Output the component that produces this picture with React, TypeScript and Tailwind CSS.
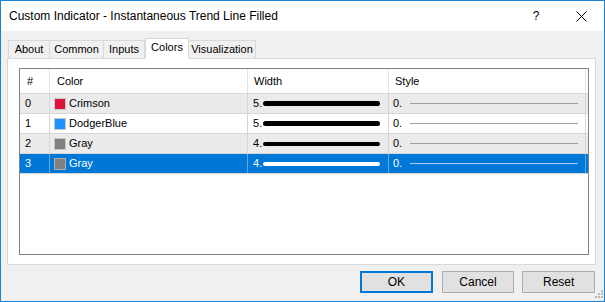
import React from 'react';

type Row = { idx: number; name: string; color: string; width: number };

const rows: Row[] = [
  { idx: 0, name: 'Crimson', color: '#dc143c', width: 5 },
  { idx: 1, name: 'DodgerBlue', color: '#1e90ff', width: 5 },
  { idx: 2, name: 'Gray', color: '#808080', width: 4 },
  { idx: 3, name: 'Gray', color: '#808080', width: 4 },
];

const tabs = ['About', 'Common', 'Inputs', 'Colors', 'Visualization'];
const tabWidths: Record<string, string> = {
  About: 'w-[42px]',
  Common: 'w-[54px]',
  Inputs: 'w-[41px]',
  Colors: 'w-[44px]',
  Visualization: 'w-[67px]',
};

function TitleBar() {
  return (
    <div className="h-[30px] bg-white flex items-center shrink-0">
      <span className="pl-[8px] text-[12px] text-black flex-1 leading-none">
        Custom Indicator - Instantaneous Trend Line Filled
      </span>
      <div className="w-[46px] h-full flex items-center justify-center text-[12px] text-black">?</div>
      <div className="w-[45px] h-full flex items-center justify-center">
        <svg width="11" height="11" viewBox="0 0 11 11">
          <path d="M0.5 0.5 L10.5 10.5 M10.5 0.5 L0.5 10.5" stroke="#000" strokeWidth="1" />
        </svg>
      </div>
    </div>
  );
}

function Tabs() {
  return (
    <div className="flex items-end h-[20px] ml-[7px] relative z-10">
      {tabs.map((t, i) => {
        const active = t === 'Colors';
        return (
          <div
            key={t}
            className={`${tabWidths[t]} flex items-center justify-center text-[11px] border-[#d9d9d9] ${
              active
                ? 'h-[21px] bg-white border border-b-white -mb-px pb-[2px]'
                : `h-[18px] bg-[#f0f0f0] border-t border-r ${i === 0 ? 'border-l' : ''}`
            }`}
          >
            {t}
          </div>
        );
      })}
    </div>
  );
}

function ColorGrid() {
  return (
    <div className="w-[570px] h-[187px] border border-[#828282] bg-white text-[11px]">
      <div className="grid grid-cols-[30px_198px_141px_197px] h-[25px] border-b border-[#d6d6d6]">
        <div className="border-r border-[#e3e3e3] pl-[7px] flex items-center">#</div>
        <div className="border-r border-[#e3e3e3] pl-[7px] flex items-center">Color</div>
        <div className="border-r border-[#e3e3e3] pl-[6px] flex items-center">Width</div>
        <div className="border-r border-[#e3e3e3] pl-[6px] flex items-center">Style</div>
      </div>
      {rows.map((r) => {
        const sel = r.idx === 3;
        const bg = sel ? 'bg-[#0078d7] text-white' : r.idx % 2 === 0 ? 'bg-[#ebebeb]' : 'bg-white';
        const cell = `flex items-center border-r ${sel ? 'border-[#5fa6e4]' : 'border-[#d6d6d6]'}`;
        return (
          <div
            key={r.idx}
            className={`grid grid-cols-[30px_198px_141px_197px] h-[20px] border-b border-[#d6d6d6] ${bg}`}
          >
            <div className={`${cell} pl-[5px]`}>{r.idx}</div>
            <div className={`${cell} pl-[4px] gap-[3px]`}>
              <span
                className={`w-[12px] h-[12px] border ${sel ? 'border-[#b0b0b0]' : 'border-[#c8c8c8]'}`}
                style={{ backgroundColor: r.color }}
              />
              <span>{r.name}</span>
            </div>
            <div className={`${cell} pl-[5px]`}>
              <span className="w-[10px]">{r.width}.</span>
              <span
                className={`w-[117px] rounded-full ${sel ? 'bg-white' : 'bg-black'}`}
                style={{ height: r.width }}
              />
            </div>
            <div className={`${cell} pl-[4px]`}>
              <span className="w-[17px]">0.</span>
              <span className={`w-[168px] h-px ${sel ? 'bg-[#a9c9ec]' : 'bg-[#a0a0a0]'}`} />
            </div>
          </div>
        );
      })}
    </div>
  );
}

function Grip() {
  return (
    <svg width="8" height="8" viewBox="0 0 8 8" className="self-end mb-[2px]">
      {[
        [6, 0],
        [3, 3],
        [6, 3],
        [0, 6],
        [3, 6],
        [6, 6],
      ].map(([x, y], i) => (
        <rect key={i} x={x} y={y} width="2" height="2" fill="#b8b8b8" />
      ))}
    </svg>
  );
}

export default function App() {
  return (
    <div
      className="w-[605px] h-[302px] border border-[#1883d7] bg-[#f0f0f0] flex flex-col text-black overflow-hidden"
      style={{ fontFamily: '"Segoe UI", "Liberation Sans", Arial, sans-serif' }}
    >
      <TitleBar />
      <div className="pt-[7px]">
        <Tabs />
        <div className="ml-[6px] w-[589px] h-[207px] border border-[#d9d9d9] bg-white pl-[11px] pt-[9px]">
          <ColorGrid />
        </div>
      </div>
      <div className="flex pt-[6px] pl-[359px] text-[12px]">
        <button className="w-[73px] h-[22px] bg-[#e1e1e1] border-2 border-[#0078d7]">OK</button>
        <button className="w-[73px] h-[22px] bg-[#e1e1e1] border border-[#adadad] ml-[9px]">Cancel</button>
        <button className="w-[73px] h-[22px] bg-[#e1e1e1] border border-[#adadad] ml-[8px]">Reset</button>
        <div className="flex-1 flex justify-end pr-[1px] h-[29px]">
          <Grip />
        </div>
      </div>
    </div>
  );
}
